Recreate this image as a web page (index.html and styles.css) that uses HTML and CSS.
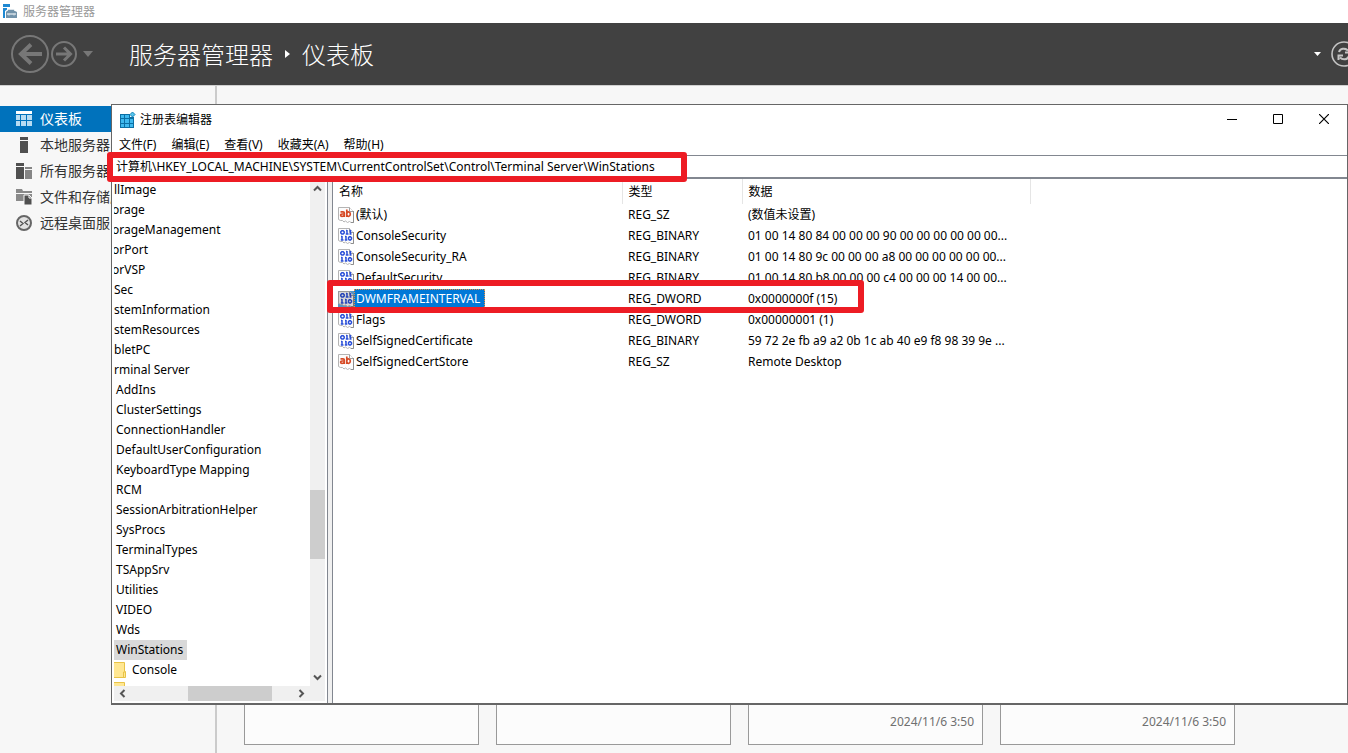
FILE: index.html
```html
<!DOCTYPE html>
<html lang="zh-CN">
<head>
<meta charset="utf-8">
<title>服务器管理器</title>
<link rel="stylesheet" href="styles.css">
</head>
<body>
<svg class="defs" aria-hidden="true">
  <defs>
    <symbol id="page" viewBox="0 0 16 16">
      <path d="M.5.5H11.500L15.500 4.500V15.500H13L11.500 14.500L9.500 15.500L7.500 14L6 15L4.500 13.500H2.500L.5 12.500Z" fill="#fcfcfc" stroke="#b4b4b4"/>
      <path d="M11.500 .5V4.500H15.500" fill="#fff" stroke="#a0a0a0"/>
      <path d="M15.500 4V15.500H13" fill="none" stroke="#8e8e8e"/>
    </symbol>
    <symbol id="string" viewBox="0 0 16 16">
      <use href="#page"/>
      <path d="M2.500 4.800H5C6 4.800 6.300 5.200 6.300 6V10M6 7H4C2.200 7 2.200 9.400 4 9.400C5.300 9.400 6 8.800 6.300 8M8.800 2.500V10M9 6C9.800 4.400 12.300 4.500 12.300 7.100C12.300 9.800 9.800 9.800 9 8.400" fill="none" stroke="#d64a26" stroke-width="1.700"/>
    </symbol>
    <symbol id="binary" viewBox="0 0 16 16">
      <use href="#page"/>
      <path d="M3.800 2.700H5.200L6.200 3.700V5L5.200 6H3.800L2.800 5V3.700ZM9 2V5.500M8 2.500H9M7.800 6H10.500M12.500 2V5.500M11.500 2.500H12.500M11.500 6H13.500M4 8V11.500M3 8.500H4M2.800 12H5.500M8 8V11.500M7 8.500H8M6.800 12H9.300M11.300 8.700H12.500L13.500 9.700V11L12.500 12H11.300L10.500 11V9.700Z" fill="none" stroke="#2a4fd8" stroke-width="1.500"/>
    </symbol>
  </defs>
</svg>

<div class="manager">
  <div class="app-title">
    <svg width="16" height="16" viewBox="0 0 16 16" aria-hidden="true"><path d="M0 0H7V3H0ZM0 4H4V14H0Z" fill="#1e88d2"/><path d="M2 7L5 5H11L14.500 7V15H2Z" fill="#fff"/><path d="M5.500 8V6.500H10.500V8" fill="none" stroke="#7393aa" stroke-width="1.400"/><path d="M3 8L4 7H12L14 8V14H3Z" fill="#7393aa"/><path d="M4 10H13" stroke="#fff"/><path d="M6 9.500V11.500M11 9.500V11.500" stroke="#d7e2ea"/></svg>
    <span>服务器管理器</span>
  </div>
  <header class="banner">
    <div class="history">
      <button class="bare" aria-label="后退"><svg width="38" height="38" viewBox="0 0 38 38" fill="none" stroke="#777"><circle cx="19" cy="19" r="18" stroke-width="2"/><path d="M31 19H9M20 9.500L10 19L20 28.500" stroke-width="4"/></svg></button>
      <button class="bare" aria-label="前进"><svg width="26" height="26" viewBox="0 0 26 26" fill="none" stroke="#777"><circle cx="13" cy="13" r="12" stroke-width="2"/><path d="M5 13H19M13 6.500L19.500 13L13 19.500" stroke-width="3"/></svg></button>
      <button class="bare drop" aria-label="历史记录"><svg width="10" height="6" viewBox="0 0 10 6"><path d="M0 0H10L5 6Z" fill="#777"/></svg></button>
    </div>
    <h1 class="crumbs">
      <span>服务器管理器</span>
      <svg width="5" height="8" viewBox="0 0 5 8" aria-hidden="true"><path d="M0 0L5 4L0 8Z" fill="#fff"/></svg>
      <span>仪表板</span>
    </h1>
    <div class="banner-tools">
      <button class="bare" aria-label="选项"><svg width="7" height="4" viewBox="0 0 7 4"><path d="M0 0H7L3.500 4Z" fill="#fff"/></svg></button>
      <button class="bare" aria-label="刷新"><svg width="26" height="26" viewBox="0 0 26 26" fill="none" stroke="#c4c4c4"><circle cx="13" cy="13" r="12" stroke-width="1.600"/><path d="M8 11C9 7.500 14 6.500 17 9.500M18.500 7V11.500H14M18 15C17 18.500 12 19.500 9 16.500M7.500 19V14.500H12" stroke-width="2"/></svg></button>
    </div>
  </header>
  <div class="workspace">
    <nav class="sidebar">
      <a class="nav-item active" href="#"><svg width="16" height="16" viewBox="0 0 16 16"><path d="M0 0H16V3H0ZM0 4H4V9H0ZM5 4H10V9H5ZM11 4H16V9H11ZM0 10H4V15H0ZM5 10H10V15H5ZM11 10H16V15H11Z" fill="#b8dcf2"/><path d="M0 0H16V3H0Z" fill="#fff"/></svg><span>仪表板</span></a>
      <a class="nav-item" href="#"><svg width="16" height="16" viewBox="0 0 16 16"><path d="M4 0H12V3H4ZM4 4H12V16H4Z" fill="#505050"/></svg><span>本地服务器</span></a>
      <a class="nav-item" href="#"><svg width="16" height="16" viewBox="0 0 16 16"><path d="M0 0H8V3H0ZM0 4H8V16H0Z" fill="#505050"/><path d="M9 4H16V6H9ZM9 7H16V16H9Z" fill="#858585"/></svg><span>所有服务器</span></a>
      <a class="nav-item" href="#"><svg width="16" height="16" viewBox="0 0 16 16"><path d="M0 0H6L7 2H16V4H0ZM0 5H16V12H0Z" fill="#8a8a8a"/><path d="M8 6H13L16 9V16H8Z" fill="#505050" stroke="#f7f7f7"/><path d="M13 6V9H16" fill="none" stroke="#f7f7f7"/></svg><span>文件和存储服</span></a>
      <a class="nav-item" href="#"><svg width="16" height="16" viewBox="0 0 16 16"><circle cx="8" cy="8" r="7" fill="#e2e2e2" stroke="#666" stroke-width="2"/><path d="M4 6L7 8.500L4 11M12 5L9 7.500L12 10" fill="none" stroke="#555" stroke-width="1.400"/></svg><span>远程桌面服</span></a>
    </nav>
    <main class="tiles">
      <div class="tile"></div>
      <div class="tile"></div>
      <div class="tile">2024/11/6 3:50</div>
      <div class="tile">2024/11/6 3:50</div>
    </main>
  </div>
</div>

<section class="regedit" aria-label="注册表编辑器">
  <div class="reg-title">
    <svg width="16" height="16" viewBox="0 0 16 16" aria-hidden="true"><path d="M0 2H10V5H14V16H0Z" fill="#0b6fa4"/><path d="M1 3h3v3H1zM5 3h4v3H5zM1 7h3v4H1zM5 7h4v4H5zM10 7h3v4h-3zM1 12h3v3H1zM5 12h4v3H5zM10 12h3v3h-3z" fill="#3fb9ee"/><path d="M12.500 0L15 2.500L12.500 5L10 2.500Z" fill="#55c5f0" stroke="#1683b5"/></svg>
    <span>注册表编辑器</span>
    <div class="window-buttons">
      <button class="bare" aria-label="最小化"><svg width="10" height="10" viewBox="0 0 10 10"><path d="M0 5.500H10" stroke="#000"/></svg></button>
      <button class="bare" aria-label="最大化"><svg width="10" height="10" viewBox="0 0 10 10"><path d="M.5.5H9.500V9.500H.5Z" fill="none" stroke="#000"/></svg></button>
      <button class="bare" aria-label="关闭"><svg width="10" height="10" viewBox="0 0 10 10"><path d="M0 0L10 10M10 0L0 10" stroke="#000" stroke-width="1.200"/></svg></button>
    </div>
  </div>
  <div class="menu">
    <button class="bare">文件(F)</button><button class="bare">编辑(E)</button><button class="bare">查看(V)</button><button class="bare">收藏夹(A)</button><button class="bare">帮助(H)</button>
  </div>
  <div class="address">
    <input aria-label="地址" value="计算机\HKEY_LOCAL_MACHINE\SYSTEM\CurrentControlSet\Control\Terminal Server\WinStations">
    <div class="mark mark-address"></div>
  </div>
  <div class="panes">
    <div class="tree-pane">
      <div class="tree-view">
        <ul class="tree">
          <li class="outer">llImage</li>
          <li class="cut">orage</li>
          <li class="cut">orageManagement</li>
          <li class="cut">orPort</li>
          <li class="cut">orVSP</li>
          <li class="outer">Sec</li>
          <li class="outer">stemInformation</li>
          <li class="outer">stemResources</li>
          <li class="outer">bletPC</li>
          <li class="outer">rminal Server</li>
          <li>AddIns</li>
          <li>ClusterSettings</li>
          <li>ConnectionHandler</li>
          <li>DefaultUserConfiguration</li>
          <li>KeyboardType Mapping</li>
          <li>RCM</li>
          <li>SessionArbitrationHelper</li>
          <li>SysProcs</li>
          <li>TerminalTypes</li>
          <li>TSAppSrv</li>
          <li>Utilities</li>
          <li>VIDEO</li>
          <li>Wds</li>
          <li class="current">WinStations</li>
          <li class="folder"><svg width="12" height="16" viewBox="0 0 12 16" aria-hidden="true"><path d="M-1 .5H10.500V9.500H11.500V15.500H-1Z" fill="#ffe793" stroke="#e8c347"/><path d="M9.500 15V10H11" fill="none" stroke="#e8c347"/></svg><span>Console</span></li>
          <li class="folder"><svg width="12" height="16" viewBox="0 0 12 16" aria-hidden="true"><path d="M-1 .5H10.500V9.500H11.500V15.500H-1Z" fill="#ffe793" stroke="#e8c347"/></svg></li>
        </ul>
        <div class="vscroll">
          <button class="bare" aria-label="向上滚动"><svg width="9" height="7" viewBox="0 0 9 7"><path d="M1 5.500L4.500 2L8 5.500" fill="none" stroke="#555" stroke-width="2"/></svg></button>
          <div class="vtrack"><div class="vthumb"></div></div>
          <button class="bare" aria-label="向下滚动"><svg width="9" height="7" viewBox="0 0 9 7"><path d="M1 1.500L4.500 5L8 1.500" fill="none" stroke="#555" stroke-width="2"/></svg></button>
        </div>
      </div>
      <div class="hscroll">
        <button class="bare" aria-label="向左滚动"><svg width="7" height="9" viewBox="0 0 7 9"><path d="M5.500 1L2 4.500L5.500 8" fill="none" stroke="#555" stroke-width="2"/></svg></button>
        <div class="htrack"><div class="hthumb"></div></div>
        <button class="bare" aria-label="向右滚动"><svg width="7" height="9" viewBox="0 0 7 9"><path d="M1.500 1L5 4.500L1.500 8" fill="none" stroke="#555" stroke-width="2"/></svg></button>
      </div>
    </div>
    <div class="list-pane">
      <table class="values">
        <colgroup><col class="c-name"><col class="c-type"><col class="c-data"></colgroup>
        <thead><tr><th>名称</th><th>类型</th><th>数据</th></tr></thead>
        <tbody>
          <tr><td><div class="name"><svg class="ico"><use href="#string"/></svg><span>(默认)</span></div></td><td>REG_SZ</td><td>(数值未设置)</td></tr>
          <tr><td><div class="name"><svg class="ico"><use href="#binary"/></svg><span>ConsoleSecurity</span></div></td><td>REG_BINARY</td><td>01 00 14 80 84 00 00 00 90 00 00 00 00 00 00...</td></tr>
          <tr><td><div class="name"><svg class="ico"><use href="#binary"/></svg><span>ConsoleSecurity_RA</span></div></td><td>REG_BINARY</td><td>01 00 14 80 9c 00 00 00 a8 00 00 00 00 00 00...</td></tr>
          <tr><td><div class="name"><svg class="ico"><use href="#binary"/></svg><span>DefaultSecurity</span></div></td><td>REG_BINARY</td><td>01 00 14 80 b8 00 00 00 c4 00 00 00 14 00 00...</td></tr>
          <tr><td><div class="name picked"><svg class="ico"><use href="#binary"/></svg><span>DWMFRAMEINTERVAL</span></div></td><td>REG_DWORD</td><td>0x0000000f (15)</td></tr>
          <tr><td><div class="name"><svg class="ico"><use href="#binary"/></svg><span>Flags</span></div></td><td>REG_DWORD</td><td>0x00000001 (1)</td></tr>
          <tr><td><div class="name"><svg class="ico"><use href="#binary"/></svg><span>SelfSignedCertificate</span></div></td><td>REG_BINARY</td><td>59 72 2e fb a9 a2 0b 1c ab 40 e9 f8 98 39 9e ...</td></tr>
          <tr><td><div class="name"><svg class="ico"><use href="#string"/></svg><span>SelfSignedCertStore</span></div></td><td>REG_SZ</td><td>Remote Desktop</td></tr>
        </tbody>
      </table>
      <div class="mark mark-row"></div>
    </div>
  </div>
</section>
</body>
</html>
```
FILE: styles.css
```css
* { box-sizing: border-box; }

body {
  margin: 0;
  overflow: hidden;
  background: #f7f7f7;
  color: #000;
  font: 12px/20px "Noto Sans", "Noto Sans CJK SC", sans-serif;
}

svg { display: block; flex: none; }
.defs { position: absolute; width: 0; height: 0; }

.bare {
  display: flex;
  align-items: center;
  justify-content: center;
  padding: 0;
  border: 0;
  background: none;
  color: inherit;
  font: inherit;
}

/* Server manager */
.manager { display: flex; flex-direction: column; height: 100vh; }

.app-title {
  display: flex;
  align-items: center;
  gap: 4px;
  height: 23px;
  padding-left: 3px;
  background: #fff;
  color: #999;
}

.banner {
  display: flex;
  align-items: center;
  height: 62px;
  padding-left: 11px;
  overflow: hidden;
  background: #414141;
  color: #fff;
}

.history { display: flex; align-items: center; gap: 2px; width: 118px; }
.drop { margin-left: 4px; }

.crumbs {
  display: flex;
  align-items: center;
  gap: 12px;
  margin: 0;
  font: 300 24px/32px "Noto Sans CJK SC", sans-serif;
}

.banner-tools {
  display: flex;
  align-items: center;
  gap: 10px;
  margin: 0 -9px 0 auto;
}

.workspace {
  display: flex;
  flex: 1;
  border-top: 1px solid #d0d0d0;
}

.sidebar {
  width: 217px;
  padding-top: 20px;
  border-right: 2px solid #cbcbcb;
}

.nav-item {
  display: flex;
  align-items: center;
  gap: 8px;
  height: 26px;
  padding-left: 16px;
  color: #333;
  font: 14px/20px "Noto Sans CJK SC", sans-serif;
  text-decoration: none;
}

.nav-item span { padding-bottom: 2px; }
.nav-item.active { background: #0072bc; color: #fff; }

.tiles {
  display: flex;
  flex: 1;
  gap: 17px;
  padding: 20px 27px 8px;
}

.tile {
  display: flex;
  flex: none;
  align-items: flex-end;
  justify-content: flex-end;
  width: 235px;
  padding: 0 8px 12px;
  border: 1px solid #999;
  background: #fcfcfc;
  color: #707070;
  font: 12px/20px "Noto Sans", sans-serif;
}

/* Registry editor window */
.regedit {
  position: absolute;
  top: 104px;
  left: 111px;
  right: 0;
  border: 1px solid #666;
  border-bottom-width: 2px;
  background: #fff;
}

.reg-title {
  display: flex;
  align-items: center;
  gap: 4px;
  height: 29px;
  padding-left: 8px;
}

.window-buttons { display: flex; align-self: flex-start; margin-left: auto; }
.window-buttons .bare { width: 46px; height: 28px; }

.menu {
  display: flex;
  gap: 15px;
  height: 21px;
  padding-left: 7px;
}

.address {
  position: relative;
  display: flex;
  height: 24px;
  border-top: 1px solid #828790;
  border-bottom: 2px solid #828790;
}

.address input {
  flex: 1;
  padding: 0 4px;
  border: 0;
  outline: 0;
  background: #fff;
  color: #000;
  font: 12px/20px "Noto Sans", "Noto Sans CJK SC", sans-serif;
}

.panes { display: flex; gap: 4px; background: #f0f0f0; }

.tree-pane {
  width: 216px;
  padding: 0 2px;
  border-right: 1px solid #828790;
  background: #fff;
}

.tree-view { display: flex; height: 507px; }

.tree {
  flex: 1;
  margin: 0;
  padding: 1px 0 0;
  overflow: hidden;
  list-style: none;
  white-space: nowrap;
}

.tree li { width: max-content; height: 20px; padding: 0 4px 0 2px; }
.tree .outer { padding-left: 0; }
.tree .cut { padding-left: 0; text-indent: -2px; }
.tree .current { background: #d9d9d9; }
.tree .folder { display: flex; align-items: center; gap: 6px; padding-left: 0; }

.vscroll {
  display: flex;
  flex-direction: column;
  width: 15px;
  background: #f0f0f0;
}

.vscroll .bare { height: 18px; }
.vtrack { flex: 1; padding-top: 293px; }
.vthumb { height: 69px; background: #cdcdcd; }

.hscroll {
  display: flex;
  height: 17px;
  border-bottom: 2px solid #fff;
  background: #f0f0f0;
}

.hscroll .bare { width: 17px; }
.htrack { width: 162px; padding-left: 57px; }
.hthumb { width: 84px; height: 100%; background: #cdcdcd; }

.list-pane {
  position: relative;
  flex: 1;
  border-left: 1px solid #828790;
  background: #fff;
}

.values { width: 697px; border-collapse: collapse; table-layout: fixed; white-space: nowrap; }
.c-name { width: 289px; }
.c-type { width: 120px; }
.c-data { width: 288px; }

.values th {
  height: 25px;
  padding: 0 6px;
  border-right: 1px solid #e5e5e5;
  font-weight: 400;
  text-align: left;
}

.values td { height: 21px; padding: 0 6px; }
.values td:first-child { padding: 0 5px; }

.name { display: flex; align-items: center; }
.ico { width: 16px; height: 16px; }
.name span { padding: 0 5px 0 2px; }
.picked span { outline: 1px dotted #e89040; outline-offset: -1px; background: #0078d7; color: #fff; }
.picked .ico { background: #66aee7; filter: brightness(.85); }

/* Highlight frames drawn over the window */
.mark {
  position: absolute;
  z-index: 1;
  border: 6px solid #ed1c24;
  border-radius: 3px;
  pointer-events: none;
}

.mark-address { top: -4px; left: -5px; width: 580px; height: 30px; }
.mark-row { top: 101px; left: -6px; width: 537px; height: 33px; }
```
